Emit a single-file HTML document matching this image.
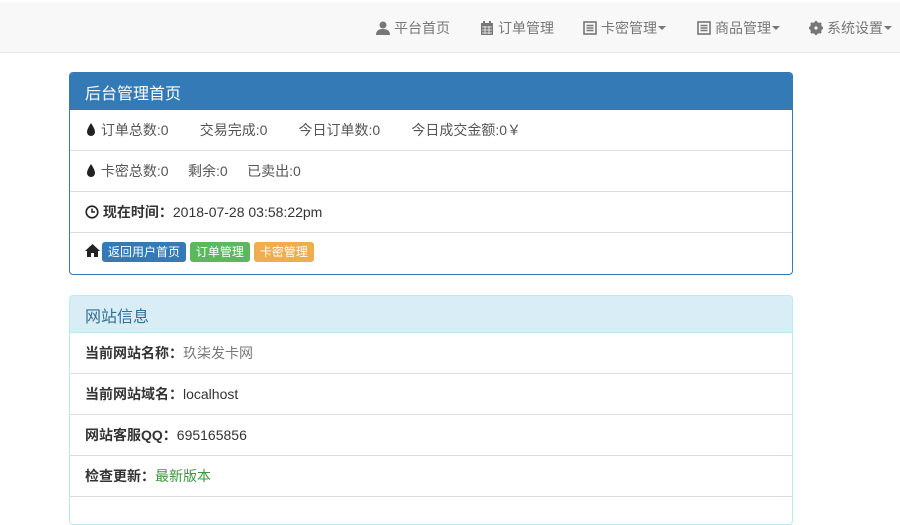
<!DOCTYPE html>
<html><head><meta charset="utf-8"><style>
*{box-sizing:border-box;margin:0;padding:0}
body{width:900px;height:502px;overflow:hidden;background:#fff;font-family:"Liberation Sans","Noto Sans CJK SC",sans-serif;font-size:14px;color:#333;position:relative}
.nav{position:absolute;left:0;top:2px;width:900px;height:51px;background:#f8f8f8;border-bottom:1px solid #e7e7e7}
.nav span{position:absolute;top:16px;color:#777;font-size:14px;white-space:nowrap}
.nav svg{vertical-align:-2px;margin-right:4px}
.car{display:inline-block;border-top:4px solid #777;border-left:4px solid transparent;border-right:4px solid transparent;vertical-align:3px;margin-left:1px}
.panel{position:absolute;left:69px;width:724px;border:1px solid #337ab7;border-radius:4px;overflow:hidden}
.ph{height:37px;padding:7px 15px;font-size:16px;background:#337ab7;color:#fff;border-bottom:1px solid #337ab7}
.row{height:41px;padding:10px 15px;border-bottom:1px solid #ddd;white-space:nowrap}
.row:last-child{border-bottom:none}
.p2{border-color:#bce8f1}
.p2 .ph{background:#d9edf7;color:#31708f;border-bottom-color:#bce8f1}
.btn{display:inline-block;color:#fff;font-size:12px;padding:2px 6px;border-radius:3px;line-height:16px}
.g{color:#555}
</style></head><body>
<div class="nav">
<span style="left:376px"><svg width="14" height="14" viewBox="0 0 14 14"><circle cx="7" cy="4" r="3.5" fill="#777"/><path d="M0 14 Q0 8 7 8 Q14 8 14 14Z" fill="#777"/></svg>平台首页</span>
<span style="left:480px"><svg width="14" height="14" viewBox="0 0 14 14"><rect x="1" y="2" width="12" height="12" fill="#777"/><rect x="3" y="0" width="2" height="3" fill="#777"/><rect x="9" y="0" width="2" height="3" fill="#777"/><path d="M2 6h10M2 9h10M2 12h10M5 5v8M9 5v8" stroke="#f8f8f8" stroke-width=".8"/></svg>订单管理</span>
<span style="left:583px"><svg width="14" height="14" viewBox="0 0 14 14"><rect x="1" y="1" width="12" height="12" fill="none" stroke="#777" stroke-width="1.6"/><path d="M3.5 4.5h7M3.5 7h7M3.5 9.5h7" stroke="#777" stroke-width="1.4"/></svg>卡密管理<i class="car"></i></span>
<span style="left:697px"><svg width="14" height="14" viewBox="0 0 14 14"><rect x="1" y="1" width="12" height="12" fill="none" stroke="#777" stroke-width="1.6"/><path d="M3.5 4.5h7M3.5 7h7M3.5 9.5h7" stroke="#777" stroke-width="1.4"/></svg>商品管理<i class="car"></i></span>
<span style="left:809px"><svg width="14" height="14" viewBox="0 0 14 14"><circle cx="7" cy="7" r="4.5" fill="none" stroke="#777" stroke-width="3"/><path d="M7 0v14M0 7h14M2 2l10 10M12 2L2 12" stroke="#777" stroke-width="2.4"/><circle cx="7" cy="7" r="1.6" fill="#f8f8f8"/></svg>系统设置<i class="car"></i></span>
</div>
<div class="panel" style="top:72px;height:203px">
<div class="ph">后台管理首页</div>
<div class="row"><svg width="12" height="14" viewBox="0 0 12 14" style="vertical-align:-2px"><path d="M6 0 Q10 6 10 9 A4 4 0 0 1 2 9 Q2 6 6 0Z" fill="#222"/></svg> <span class="g">订单总数:0</span>&nbsp;&nbsp;&nbsp;&nbsp;&nbsp;&nbsp;&nbsp;&nbsp;<span class="g">交易完成:0</span>&nbsp;&nbsp;&nbsp;&nbsp;&nbsp;&nbsp;&nbsp;&nbsp;<span class="g">今日订单数:0</span>&nbsp;&nbsp;&nbsp;&nbsp;&nbsp;&nbsp;&nbsp;&nbsp;<span class="g">今日成交金额:0￥</span></div>
<div class="row"><svg width="12" height="14" viewBox="0 0 12 14" style="vertical-align:-2px"><path d="M6 0 Q10 6 10 9 A4 4 0 0 1 2 9 Q2 6 6 0Z" fill="#222"/></svg> <span class="g">卡密总数:0</span>&nbsp;&nbsp;&nbsp;&nbsp;&nbsp;<span class="g">剩余:0</span>&nbsp;&nbsp;&nbsp;&nbsp;&nbsp;<span class="g">已卖出:0</span></div>
<div class="row"><svg width="14" height="14" viewBox="0 0 14 14" style="vertical-align:-2px"><circle cx="7" cy="7" r="5.8" fill="none" stroke="#222" stroke-width="1.6"/><path d="M7 3.5V7h3" fill="none" stroke="#222" stroke-width="1.5"/></svg> <b>现在时间：</b>2018-07-28 03:58:22pm</div>
<div class="row" style="padding-top:9px"><svg width="15" height="13" viewBox="0 0 15 13" style="vertical-align:-1px"><path d="M7.5 0L0 7h2v6h4V9h3v4h4V7h2Z" fill="#222"/></svg><span class="btn" style="background:#337ab7;margin-left:2px">返回用户首页</span> <span class="btn" style="background:#5cb85c">订单管理</span> <span class="btn" style="background:#f0ad4e">卡密管理</span></div>
</div>
<div class="panel p2" style="top:295px;height:230px">
<div class="ph">网站信息</div>
<div class="row"><b>当前网站名称：</b><span style="color:#777">玖柒发卡网</span></div>
<div class="row"><b>当前网站域名：</b>localhost</div>
<div class="row"><b>网站客服QQ：</b>695165856</div>
<div class="row"><b>检查更新：</b><span style="color:#3c963c">最新版本</span></div>
<div class="row"></div>
</div>
</body></html>
